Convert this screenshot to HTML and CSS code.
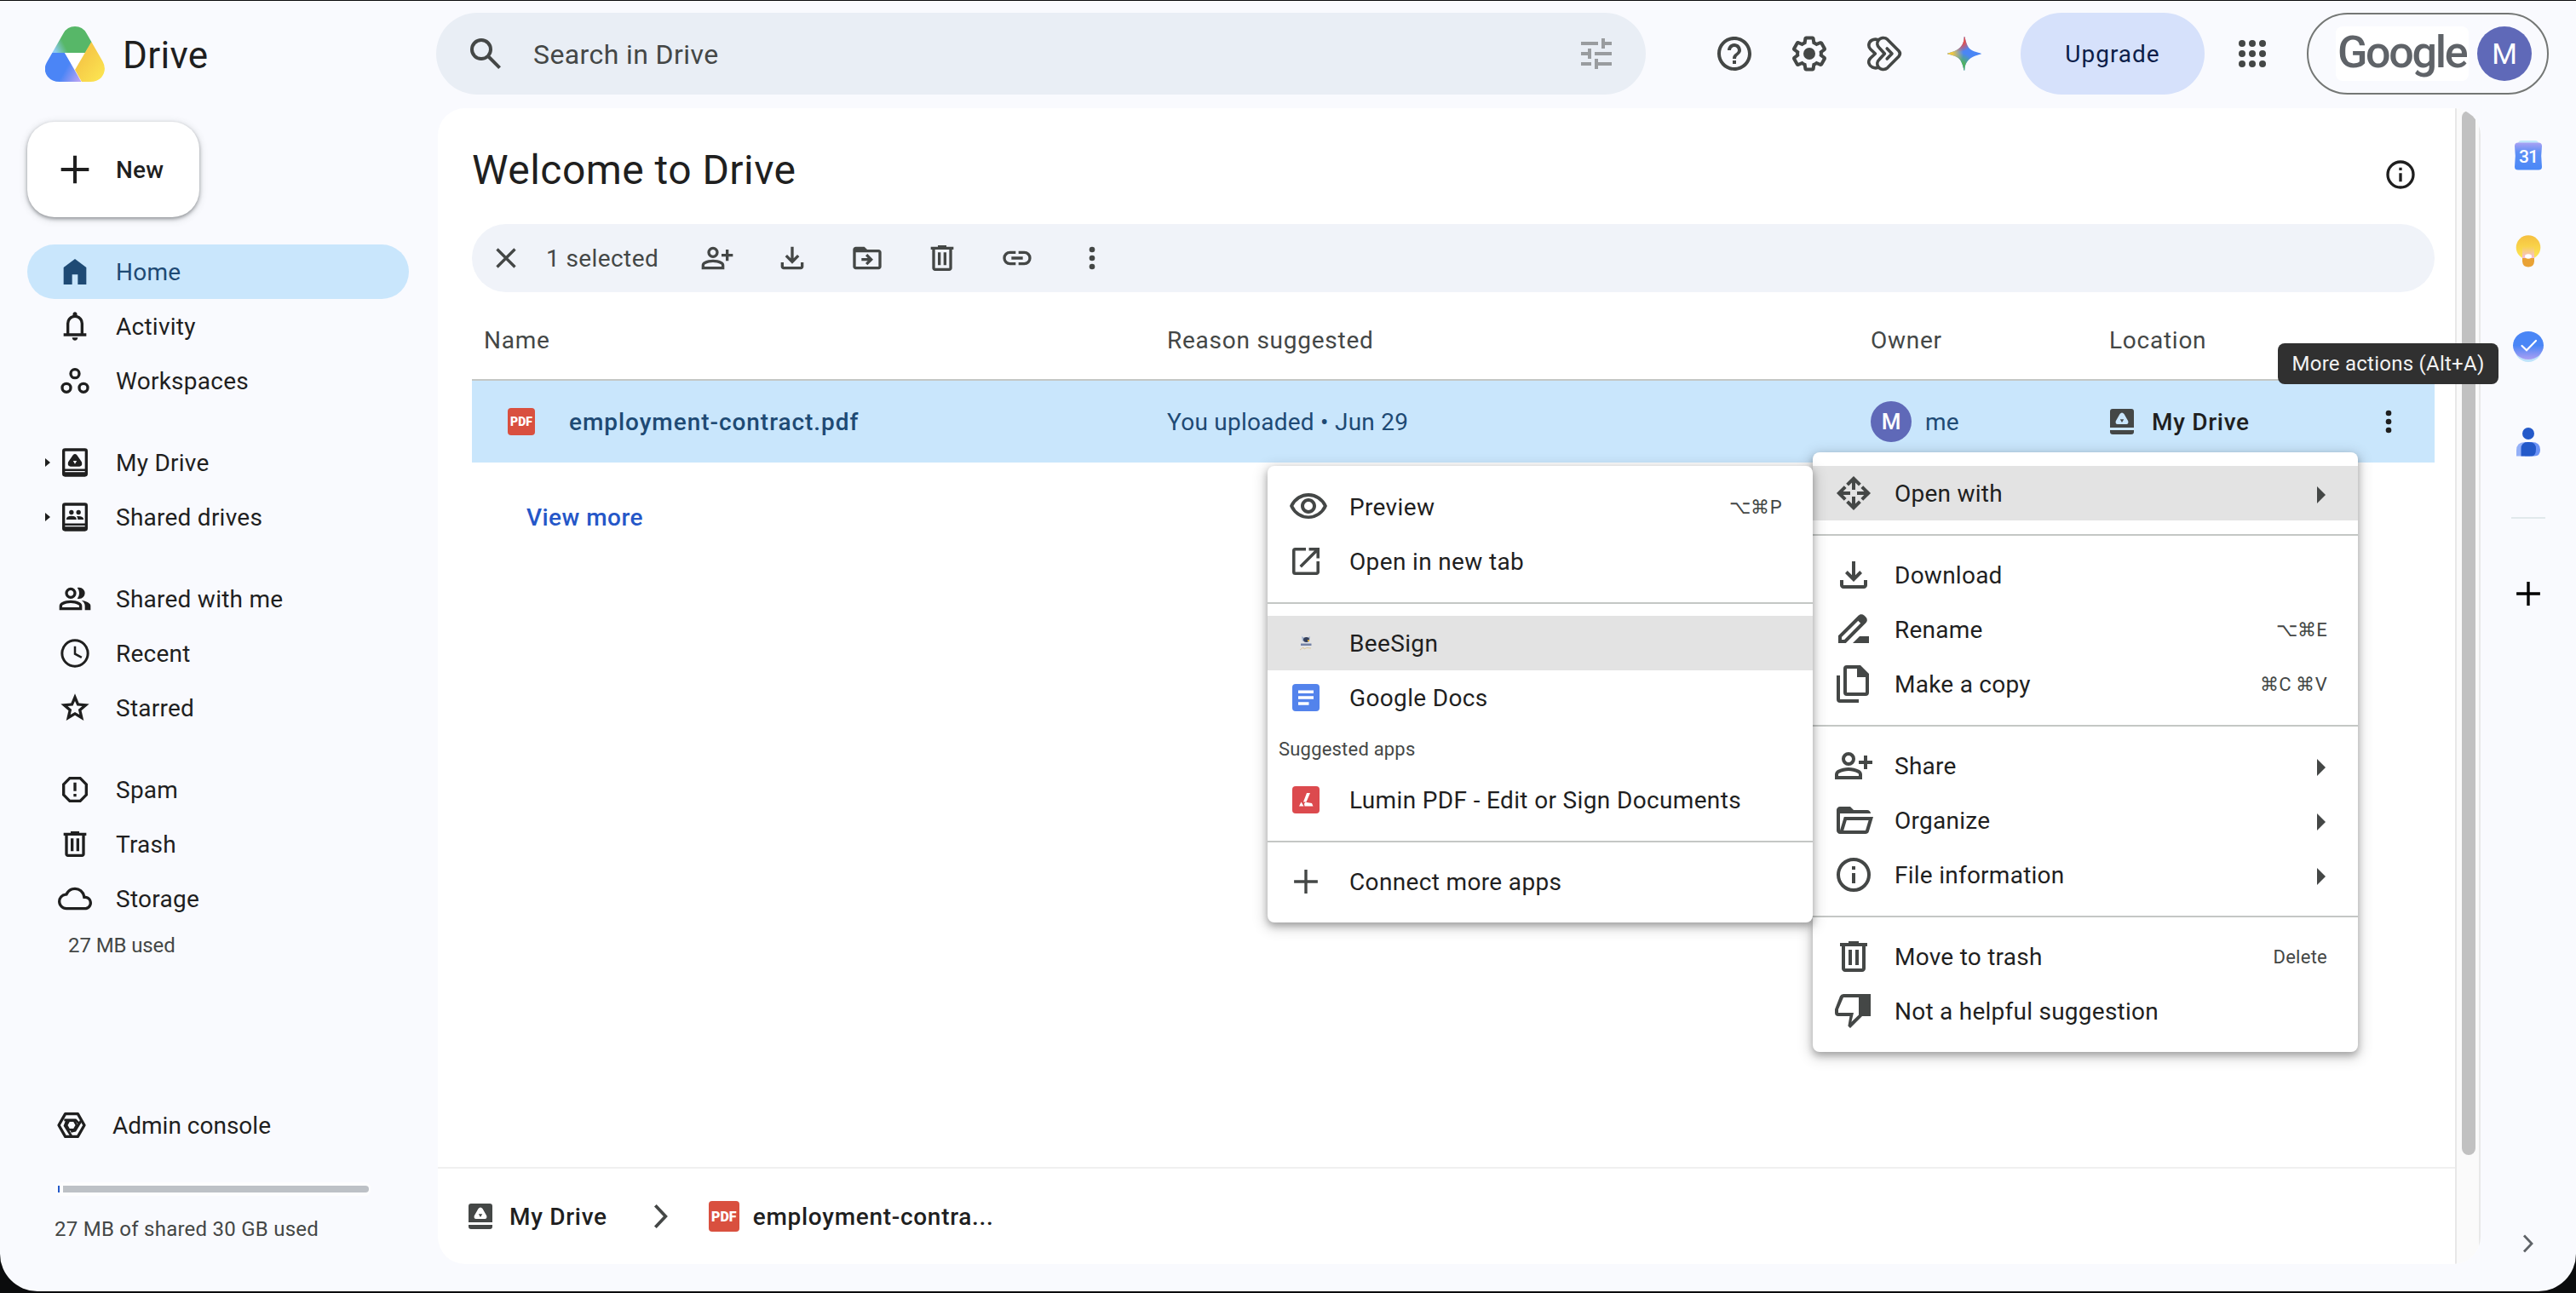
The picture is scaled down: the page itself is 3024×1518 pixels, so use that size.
FILE: index.html
```
<!DOCTYPE html>
<html lang="en">
<head>
  <meta charset="UTF-8" />
  <meta name="viewport" content="width=device-width, initial-scale=1.0" />
  <title>Home - Google Drive</title>
  <link rel="stylesheet" href="styles.css">
</head>
<body>
  <!-- icon sprite -->
  <svg class="sprite" width="0" height="0">
    <symbol id="i-plus" viewBox="0 0 24 24"><path d="M10.8 2.200h2.400v8.600h8.600v2.400h-8.600v8.600h-2.400v-8.600H2.200v-2.400h8.600z"/></symbol>
    <symbol id="i-home" viewBox="0 0 24 24"><path d="M4 21V9l8-6 8 6v12h-6v-7h-4v7z"/></symbol>
    <symbol id="i-bell" viewBox="0 0 24 24"><path d="M4 19v-2h2v-7q0-2.075 1.25-3.687T10.5 4.2v-.7q0-.625.438-1.062T12 2t1.063.438T13.5 3.5v.7q2 .5 3.25 2.113T18 10v7h2v2zm8 3q-.825 0-1.412-.587T10 20h4q0 .825-.587 1.413T12 22m-4-5h8v-7q0-1.65-1.175-2.825T12 6T9.175 7.175T8 10z"/></symbol>
    <symbol id="i-workspaces" viewBox="0 0 24 24"><g fill="none" stroke="currentColor" stroke-width="2"><circle cx="12" cy="7" r="3"/><circle cx="6" cy="17" r="3"/><circle cx="18" cy="17" r="3"/></g></symbol>
    <symbol id="i-drive" viewBox="0 0 24 24"><path fill-rule="evenodd" d="M5 2h14a2 2 0 0 1 2 2v16a2 2 0 0 1-2 2H5a2 2 0 0 1-2-2V4a2 2 0 0 1 2-2zm0 2v12.500h14V4zm0 14v.8h14V18zm5.600-11.200q1.400-1.600 2.800 0l3.300 4.800q1 2.800-1.500 3.200H8.800q-2.500-.4-1.500-3.200zM10.700 10.800l1.300 2.200 1.300-2.200z"/></symbol>
    <symbol id="i-shared-drives" viewBox="0 0 24 24"><path fill-rule="evenodd" d="M5 2h14a2 2 0 0 1 2 2v16a2 2 0 0 1-2 2H5a2 2 0 0 1-2-2V4a2 2 0 0 1 2-2zm0 2v12.500h14V4zm0 14v.8h14V18z"/><circle cx="9.500" cy="8.700" r="1.600"/><circle cx="14.500" cy="8.700" r="1.600"/><path d="M5.900 13.800q0-2.500 3.600-2.500t3.600 2.500zM14 13.800q0-1.500-.8-2.400 4.900-.4 4.900 2.400z"/></symbol>
    <symbol id="i-group" viewBox="0 0 24 24"><path d="M1 20v-2.800q0-.85.438-1.562T2.600 14.550q1.550-.775 3.150-1.162T9 13t3.250.388t3.150 1.162q.725.375 1.163 1.088T17 17.200V20zm18 0v-3q0-1.100-.612-2.113T16.650 13.150q1.275.15 2.400.513t2.100.887q.9.500 1.375 1.112T23 17v3zM9 12q-1.650 0-2.825-1.175T5 8t1.175-2.825T9 4t2.825 1.175T13 8t-1.175 2.825T9 12m10-4q0 1.650-1.175 2.825T15 12q-.275 0-.7-.062t-.7-.138q.675-.8 1.038-1.775T15 8t-.362-2.025T13.600 4.200q.35-.125.7-.163T15 4q1.650 0 2.825 1.175T19 8M3 18h12v-.8q0-.275-.137-.5t-.363-.35q-1.350-.675-2.725-1.012T9 15t-2.775.338T3.500 16.350q-.225.125-.363.35T3 17.200zm6-8q.825 0 1.413-.587T11 8t-.587-1.412T9 6t-1.412.588T7 8t.588 1.413T9 10"/></symbol>
    <symbol id="i-clock" viewBox="0 0 24 24"><g fill="none" stroke="currentColor"><circle cx="12" cy="12" r="9.100" stroke-width="1.800"/><path d="M12 7v5.400l4.700 2.500" stroke-width="1.500"/></g></symbol>
    <symbol id="i-star" viewBox="0 0 24 24"><path d="m8.850 16.825l3.150-1.900l3.150 1.925l-.825-3.600l2.775-2.400l-3.650-.325l-1.450-3.400l-1.450 3.375l-3.650.325l2.775 2.425zM5.825 21l1.625-7.025L2 9.250l7.200-.625L12 2l2.800 6.625l7.200.625l-5.450 4.725L18.175 21L12 17.275z"/></symbol>
    <symbol id="i-spam" viewBox="0 0 24 24"><path fill="none" stroke="currentColor" stroke-width="2" d="M8.300 4h7.400L20 8.300v7.400L15.700 20H8.300L4 15.700V8.300z"/><path d="M11 7h2v6h-2zM11 15h2v2h-2z"/></symbol>
    <symbol id="i-trash" viewBox="0 0 24 24"><path d="M7 21q-.825 0-1.412-.587T5 19V6H4V4h5V3h6v1h5v2h-1v13q0 .825-.587 1.413T17 21zM17 6H7v13h10zM9 17h2V8H9zm4 0h2V8h-2z"/></symbol>
    <symbol id="i-cloud" viewBox="0 0 24 24"><path d="M19.350 10.040A7.490 7.490 0 0 0 12 4C9.110 4 6.600 5.640 5.350 8.040A5.994 5.994 0 0 0 0 14c0 3.310 2.690 6 6 6h13c2.760 0 5-2.240 5-5 0-2.640-2.050-4.780-4.650-4.960zM19 18H6c-2.210 0-4-1.790-4-4 0-2.050 1.530-3.760 3.560-3.970l1.070-.11.5-.95A5.469 5.469 0 0 1 12 6c2.620 0 4.880 1.860 5.390 4.430l.3 1.500 1.530.11A2.980 2.980 0 0 1 22 15c0 1.650-1.350 3-3 3z"/></symbol>
    <symbol id="i-admin" viewBox="0 0 24 24"><g fill="none" stroke="currentColor" stroke-width="2"><path stroke-linejoin="round" d="M7.600 4h8.800l4.600 8-4.600 8H7.600L3 12z"/><path stroke-width="1.700" d="M6.800 8.300h8l3.200 3.200M18.600 9l-4.100 6.700-3 .8M11.800 19.500L7.300 12.300 8.600 9"/><path stroke-width="1.500" d="M10.200 8.900h3.600l1.800 3.100-1.800 3.100h-3.600L8.400 12z"/></g></symbol>
    <symbol id="i-search" viewBox="0 0 24 24"><path d="m19.600 21l-6.300-6.300q-.75.6-1.725.95T9.500 16q-2.725 0-4.612-1.888T3 9.500t1.888-4.612T9.500 3t4.613 1.888T16 9.500q0 1.100-.35 2.075T14.700 13.300l6.300 6.300zM9.500 14q1.875 0 3.188-1.312T14 9.500t-1.312-3.187T9.500 5T6.313 6.313T5 9.500t1.313 3.188T9.500 14"/></symbol>
    <symbol id="i-tune" viewBox="0 0 24 24"><path d="M3 17v2h6v-2H3zM3 5v2h10V5H3zm10 16v-2h8v-2h-8v-2h-2v6h2zM7 9v2H3v2h4v2h2V9H7zm14 4v-2H11v2h10zm-6-4h2V7h4V5h-4V3h-2v6z"/></symbol>
    <symbol id="i-help" viewBox="0 0 24 24"><path d="M11 18h2v-2h-2v2zm1-16C6.480 2 2 6.480 2 12s4.480 10 10 10 10-4.480 10-10S17.520 2 12 2zm0 18c-4.410 0-8-3.590-8-8s3.590-8 8-8 8 3.590 8 8-3.590 8-8 8zm0-14c-2.210 0-4 1.790-4 4h2c0-1.100.9-2 2-2s2 .9 2 2c0 2-3 1.750-3 5h2c0-2.250 3-2.500 3-5 0-2.210-1.790-4-4-4z"/></symbol>
    <symbol id="i-settings" viewBox="0 0 24 24"><path d="M13.850 22.250h-3.700c-.74 0-1.360-.54-1.450-1.270l-.27-1.890c-.27-.14-.53-.29-.79-.46l-1.800.72c-.7.26-1.470-.03-1.810-.65L2.200 15.530c-.35-.66-.2-1.440.36-1.880l1.530-1.190c-.01-.15-.02-.3-.02-.46 0-.15.01-.31.02-.46l-1.520-1.190c-.59-.45-.74-1.260-.37-1.880l1.850-3.190c.34-.62 1.110-.9 1.790-.63l1.810.73c.26-.17.52-.32.78-.46l.27-1.910c.09-.7.71-1.250 1.440-1.250h3.700c.74 0 1.360.54 1.450 1.270l.27 1.890c.27.14.53.29.79.46l1.800-.72c.71-.26 1.480.03 1.820.65l1.840 3.180c.36.66.2 1.440-.36 1.880l-1.520 1.190c.01.15.02.3.02.46s-.01.31-.02.46l1.520 1.190c.56.45.72 1.230.37 1.860l-1.860 3.220c-.34.62-1.110.9-1.800.63l-1.800-.72c-.26.17-.52.32-.78.46l-.27 1.910c-.1.680-.72 1.220-1.460 1.220zm-3.230-2h2.760l.37-2.550.53-.22c.44-.18.88-.44 1.340-.78l.45-.34 2.380.96 1.380-2.400-2.030-1.580.07-.56c.03-.26.06-.51.06-.78s-.03-.53-.06-.78l-.07-.56 2.030-1.580-1.390-2.400-2.390.96-.45-.35c-.42-.32-.87-.58-1.330-.77l-.52-.22-.37-2.550h-2.760l-.37 2.550-.53.21c-.44.19-.88.44-1.340.79l-.45.33-2.380-.95-1.390 2.390 2.030 1.580-.07.56a7 7 0 0 0-.06.79c0 .26.02.53.06.78l.07.56-2.030 1.580 1.380 2.400 2.390-.96.45.35c.43.33.86.58 1.330.77l.53.22.38 2.550z"/><circle cx="12" cy="12" r="3.500"/></symbol>
    <symbol id="i-labs" viewBox="0 0 24 24"><g fill="none" stroke="currentColor" stroke-width="1.800" stroke-linejoin="round" stroke-linecap="round"><path d="M9.100 8.600 12.200 12 9.100 15.400C7.700 16.700 7.600 18.400 8.400 19.600c1.200 1.900 3.900 2.200 5.500.7l6.600-6.700q1.400-1.600 0-3.200l-6.600-6.700c-1.600-1.500-4.300-1.200-5.500.7-.8 1.200-.7 2.900.7 4.200z"/><path d="M8 3.700C5.500 3.100 3 4.500 2.900 7c0 1 .4 1.800 1 2.400L6.700 12l-2.800 2.600c-.9.9-1.200 2.100-.9 3.200.6 2 3 3 5 2.500M13.600 9l2.900 3-2.900 3"/></g></symbol>
    <symbol id="i-apps" viewBox="0 0 24 24"><circle cx="6" cy="6" r="2"/><circle cx="12" cy="6" r="2"/><circle cx="18" cy="6" r="2"/><circle cx="6" cy="12" r="2"/><circle cx="12" cy="12" r="2"/><circle cx="18" cy="12" r="2"/><circle cx="6" cy="18" r="2"/><circle cx="12" cy="18" r="2"/><circle cx="18" cy="18" r="2"/></symbol>
    <symbol id="i-info" viewBox="0 0 24 24"><path d="M11 7h2v2h-2zM11 11h2v6h-2z"/><circle cx="12" cy="12" r="9" fill="none" stroke="currentColor" stroke-width="2"/></symbol>
    <symbol id="i-close" viewBox="0 0 24 24"><path fill="none" stroke="currentColor" stroke-width="2" d="M5.700 5.700l12.600 12.600M18.300 5.700L5.700 18.300"/></symbol>
    <symbol id="i-person-add" viewBox="0 0 24 24"><path d="M18 14v-3h-3V9h3V6h2v3h3v2h-3v3zm-9-2q-1.650 0-2.825-1.175T5 8t1.175-2.825T9 4t2.825 1.175T13 8t-1.175 2.825T9 12m-8 8v-2.800q0-.85.438-1.562T2.600 14.550q1.550-.775 3.150-1.162T9 13t3.250.388t3.150 1.162q.725.375 1.163 1.088T17 17.200V20zm2-2h12v-.8q0-.275-.137-.5t-.363-.35q-1.350-.675-2.725-1.012T9 15t-2.775.338T3.500 16.350q-.225.125-.363.35T3 17.200zm6-8q.825 0 1.413-.587T11 8t-.587-1.412T9 6t-1.412.588T7 8t.588 1.413T9 10"/></symbol>
    <symbol id="i-download" viewBox="0 0 24 24"><path d="M12 16l-5-5 1.400-1.450 2.600 2.600V4h2v8.150l2.600-2.600L17 11zM6 20q-.825 0-1.412-.587T4 18v-3h2v3h12v-3h2v3q0 .825-.587 1.413T18 20z"/></symbol>
    <symbol id="i-move" viewBox="0 0 24 24"><path fill-rule="evenodd" d="M4 20q-.825 0-1.412-.587T2 18V6q0-.825.588-1.412T4 4h6l2 2h8q.825 0 1.413.588T22 8v10q0 .825-.587 1.413T20 20zm0-2h16V8H4zm8.200-1l4-4-4-4-1.400 1.400 1.600 1.600H8v2h4.400l-1.600 1.600z"/></symbol>
    <symbol id="i-link" viewBox="0 0 24 24"><path d="M11 17H7q-2.075 0-3.537-1.463T2 12t1.463-3.537T7 7h4v2H7q-1.250 0-2.125.875T4 12t.875 2.125T7 15h4zm-3-4v-2h8v2zm5 4v-2h4q1.250 0 2.125-.875T20 12t-.875-2.125T17 9h-4V7h4q2.075 0 3.538 1.463T22 12t-1.463 3.538T17 17z"/></symbol>
    <symbol id="i-more" viewBox="0 0 24 24"><circle cx="12" cy="6" r="2"/><circle cx="12" cy="12" r="2"/><circle cx="12" cy="18" r="2"/></symbol>
    <symbol id="i-drive-solid" viewBox="0 0 28 30"><path fill-rule="evenodd" d="M3 0h22a3 3 0 0 1 3 3v19H0V3a3 3 0 0 1 3-3zm8.500 6l-4.700 8.200q-.9 3.600 2 3.800h10.400q2.900-.2 2-3.800L16.500 6q-2.500-3-5 0zm.3 6.200h4.400L14 16zM0 25h28v2a3 3 0 0 1-3 3H3a3 3 0 0 1-3-3z"/></symbol>
    <symbol id="i-open-with" viewBox="0 0 24 24"><path fill="none" stroke="currentColor" stroke-width="2" d="M12 3.500V10M8.300 7.100L12 3.400l3.700 3.700M12 20.500V14M8.300 16.900l3.700 3.700 3.700-3.700M3.500 12H10M7.100 8.300L3.400 12l3.700 3.700M20.500 12H14M16.900 8.300l3.700 3.700-3.700 3.700"/></symbol>
    <symbol id="i-rename" viewBox="0 0 24 24"><path fill="none" stroke="currentColor" stroke-width="2" d="M4 19v-3L15.600 4.500a1.300 1.300 0 0 1 1.900 0l1 1a1.300 1.300 0 0 1 0 1.900L7 19z"/><path d="M13.500 5.800l2.700-2.500 3.500 3.500-2.500 2.700zM11.500 20l4-4H21v4z"/></symbol>
    <symbol id="i-copy" viewBox="0 0 24 24"><path fill-rule="evenodd" d="M8 1h8l5 5v11a2 2 0 0 1-2 2H8a2 2 0 0 1-2-2V3a2 2 0 0 1 2-2zm0 2v14h11V8h-5V3z"/><path d="M2 7h2v14h11v2H4a2 2 0 0 1-2-2z"/></symbol>
    <symbol id="i-folder" viewBox="0 0 24 24"><path d="M4 20q-.825 0-1.412-.587T2 18V6q0-.825.588-1.412T4 4h6l2 2h8q.825 0 1.413.588T22 8H4v10l2.400-8h17.100l-2.575 8.575q-.2.650-.737 1.038T19 20zm2.100-2H19l1.800-6H7.900z"/></symbol>
    <symbol id="i-thumb-down" viewBox="0 0 24 24"><path fill-rule="evenodd" d="M6 2h16v13h-5l-7 7-1.300-1.200 1-5.800H3q-2 0-2-2v-2l3-7.700Q4.600 2 6 2zm9 2H6l-3 7v2h9l-1.300 5.400 4.300-4.200z"/></symbol>
    <symbol id="i-eye" viewBox="0 0 24 24"><path d="M12 6a9.770 9.770 0 0 1 8.820 5.500 9.647 9.647 0 0 1-17.640 0A9.770 9.770 0 0 1 12 6m0-2C7 4 2.730 7.110 1 11.500 2.730 15.890 7 19 12 19s9.270-3.110 11-7.500C21.270 7.110 17 4 12 4zm0 5a2.500 2.500 0 0 1 0 5 2.500 2.500 0 0 1 0-5m0-2c-2.480 0-4.500 2.020-4.500 4.500S9.520 16 12 16s4.500-2.020 4.500-4.500S14.480 7 12 7z"/></symbol>
    <symbol id="i-new-tab" viewBox="3 3 18 18"><path d="M19 19H5V5h7V3H5a2 2 0 0 0-2 2v14a2 2 0 0 0 2 2h14c1.100 0 2-.9 2-2v-7h-2v7zM14 3v2h3.590l-9.830 9.830 1.410 1.410L19 6.410V10h2V3h-7z"/></symbol>
    <symbol id="i-chevron" viewBox="0 0 24 24"><path fill="none" stroke="currentColor" stroke-width="2.800" d="M7 2.500l9 9.500-9 9.500"/></symbol>
  </svg>

  <div class="window">
    <header class="topbar">
      <div class="brand">
        <svg class="brand-logo" viewBox="0 0 70 65">
          <defs>
            <clipPath id="logo-clip"><path d="M21.500 8Q26 0 35 0t13.500 8L67.500 41Q73 51 66 60q-5 5-13 5H17Q8 65 3 59-3 51 2 42z"/></clipPath>
            <linearGradient id="lg-green" gradientUnits="userSpaceOnUse" x1="10" y1="26" x2="26" y2="18"><stop offset="0" stop-color="#8ecbf3"/><stop offset=".75" stop-color="#57b768"/></linearGradient>
            <linearGradient id="lg-blue" gradientUnits="userSpaceOnUse" x1="24" y1="50" x2="42" y2="60"><stop offset="0" stop-color="#4b85f6"/><stop offset="1" stop-color="#b7a3f3"/></linearGradient>
            <linearGradient id="lg-yellow" gradientUnits="userSpaceOnUse" x1="44" y1="40" x2="66" y2="58"><stop offset="0" stop-color="#f6ca47"/><stop offset="1" stop-color="#fbe250"/></linearGradient>
          </defs>
          <g clip-path="url(#logo-clip)">
            <path fill="url(#lg-green)" d="M0 0h66L47 31H0z"/>
            <path fill="url(#lg-blue)" d="M-2 31h25l20 35H-2z"/>
            <path fill="#fff" d="M23 31h24L35 51z"/>
            <path fill="url(#lg-yellow)" d="M54 18.500L35 51l8.500 15H74V18z"/>
          </g>
        </svg>
        <span class="brand-name">Drive</span>
      </div>
      <div class="search">
        <svg class="icon-lg"><use href="#i-search"/></svg>
        <span class="search-text">Search in Drive</span>
        <svg class="icon-lg tune"><use href="#i-tune"/></svg>
      </div>
      <div class="actions">
        <svg class="icon-lg"><use href="#i-help"/></svg>
        <svg class="icon-lg"><use href="#i-settings"/></svg>
        <svg class="icon-lg"><use href="#i-labs"/></svg>
        <svg class="icon-lg" viewBox="0 0 24 24">
          <defs>
            <radialGradient id="sp-red" gradientUnits="userSpaceOnUse" cx="9.500" cy="3.500" r="7.500"><stop offset=".4" stop-color="#e8504a"/><stop offset="1" stop-color="#e8504a" stop-opacity="0"/></radialGradient>
            <radialGradient id="sp-yellow" gradientUnits="userSpaceOnUse" cx="2" cy="12" r="9.500"><stop offset=".3" stop-color="#f0c93f"/><stop offset="1" stop-color="#f0c93f" stop-opacity="0"/></radialGradient>
            <radialGradient id="sp-green" gradientUnits="userSpaceOnUse" cx="9.500" cy="20.500" r="9"><stop offset=".4" stop-color="#50b262"/><stop offset="1" stop-color="#50b262" stop-opacity="0"/></radialGradient>
            <path id="spark" d="M12 2c.5 0 .5 3.200 2.400 6.200S22 11.400 22 12s-4.700.8-7.600 3.800S12.500 22 12 22s-.5-3.200-2.400-6.200S2 12.600 2 12s4.700-.8 7.600-3.800S11.500 2 12 2z"/>
          </defs>
          <use href="#spark" fill="#4a86f5"/>
          <use href="#spark" fill="url(#sp-green)"/>
          <use href="#spark" fill="url(#sp-yellow)"/>
          <use href="#spark" fill="url(#sp-red)"/>
        </svg>
      </div>
      <button class="upgrade">Upgrade</button>
      <svg class="icon-lg apps"><use href="#i-apps"/></svg>
      <div class="account">
        <span class="google">Google</span>
        <span class="avatar">M</span>
      </div>
    </header>

    <div class="content">
      <nav class="sidebar">
        <button class="new-btn"><svg><use href="#i-plus"/></svg>New</button>
        <div class="nav-group">
          <a class="nav-item active"><svg><use href="#i-home"/></svg>Home</a>
          <a class="nav-item"><svg><use href="#i-bell"/></svg>Activity</a>
          <a class="nav-item"><svg><use href="#i-workspaces"/></svg>Workspaces</a>
        </div>
        <div class="nav-group">
          <a class="nav-item expandable"><svg><use href="#i-drive"/></svg>My Drive</a>
          <a class="nav-item expandable"><svg><use href="#i-shared-drives"/></svg>Shared drives</a>
        </div>
        <div class="nav-group">
          <a class="nav-item"><svg><use href="#i-group"/></svg>Shared with me</a>
          <a class="nav-item"><svg><use href="#i-clock"/></svg>Recent</a>
          <a class="nav-item"><svg><use href="#i-star"/></svg>Starred</a>
        </div>
        <div class="nav-group">
          <a class="nav-item"><svg><use href="#i-spam"/></svg>Spam</a>
          <a class="nav-item"><svg><use href="#i-trash"/></svg>Trash</a>
          <a class="nav-item"><svg><use href="#i-cloud"/></svg>Storage</a>
          <div class="used">27 MB used</div>
        </div>
        <div class="sidebar-bottom">
          <a class="admin"><svg><use href="#i-admin"/></svg>Admin console</a>
          <div class="meter"><span class="meter-used"></span><span class="meter-free"></span></div>
          <div class="quota">27 MB of shared 30 GB used</div>
        </div>
      </nav>

      <main class="main">
        <div class="pane">
          <div class="title-row">
            <h1>Welcome to Drive</h1>
            <svg class="icon"><use href="#i-info"/></svg>
          </div>
          <div class="toolbar">
            <svg class="icon"><use href="#i-close"/></svg>
            <span class="selected-count">1 selected</span>
            <div class="toolbar-icons">
              <svg class="icon"><use href="#i-person-add"/></svg>
              <svg class="icon"><use href="#i-download"/></svg>
              <svg class="icon"><use href="#i-move"/></svg>
              <svg class="icon"><use href="#i-trash"/></svg>
              <svg class="icon"><use href="#i-link"/></svg>
              <svg class="icon"><use href="#i-more"/></svg>
            </div>
          </div>
          <div class="table">
            <div class="row head">
              <span>Name</span><span>Reason suggested</span><span>Owner</span><span>Location</span>
            </div>
            <div class="row file">
              <span class="cell name"><span class="pdf">PDF</span>employment-contract.pdf</span>
              <span>You uploaded • Jun 29</span>
              <span class="cell owner"><span class="avatar small">M</span>me</span>
              <span class="cell location"><svg class="drive-solid"><use href="#i-drive-solid"/></svg>My Drive</span>
              <svg class="icon row-more"><use href="#i-more"/></svg>
            </div>
          </div>
          <a class="view-more">View more</a>
          <div class="breadcrumb">
            <svg class="drive-solid"><use href="#i-drive-solid"/></svg>
            <span class="crumb-drive">My Drive</span>
            <svg class="crumb-arrow"><use href="#i-chevron"/></svg>
            <span class="pdf large">PDF</span>
            <span>employment-contra...</span>
          </div>
        </div>
        <div class="scroll-track"><div class="scroll-thumb"></div></div>
      </main>

      <aside class="side-panel">
        <svg class="app" viewBox="0 0 36 36">
          <defs>
            <linearGradient id="cal" x1="0" y1="0" x2="0" y2="1"><stop offset="0" stop-color="#aaa2f4"/><stop offset=".35" stop-color="#5e8ff5"/><stop offset="1" stop-color="#4a88f7"/></linearGradient>
          </defs>
          <rect x="6" y="0" width="24" height="10" rx="4" fill="#c0e7fb"/>
          <path fill="url(#cal)" d="M6 2.500h24q4 0 4 4l-.8 11.500.8 13q0 3.500-4 3.500H6q-4 0-4-3.500l.8-13L2 6.500q0-4 4-4z"/>
          <text x="18" y="25.500" class="cal-day">31</text>
        </svg>
        <svg class="app" viewBox="0 0 36 36">
          <defs>
            <linearGradient id="bulb" x1="0" y1="0" x2="0" y2="1"><stop offset="0" stop-color="#f5bf40"/><stop offset="1" stop-color="#fdea55"/></linearGradient>
            <linearGradient id="glow" x1="0" y1="0" x2="0" y2="1"><stop offset="0" stop-color="#f3b6d0" stop-opacity="0"/><stop offset="1" stop-color="#f3b6ec"/></linearGradient>
          </defs>
          <circle cx="18" cy="13.500" r="14.300" fill="url(#bulb)"/>
          <path fill="url(#glow)" d="M11 12h14v15H11z"/>
          <path fill="#e9a235" d="M11 26h14v4q-.5 6.500-7 6.500T11 30z"/>
          <ellipse cx="18" cy="24" rx="4" ry="2.800" fill="#fff"/>
        </svg>
        <svg class="app" viewBox="0 0 36 36">
          <defs>
            <linearGradient id="task" x1="0" y1="0" x2="0" y2="1"><stop offset=".5" stop-color="#4a86f6"/><stop offset="1" stop-color="#ab9ff3"/></linearGradient>
          </defs>
          <circle cx="18" cy="20" r="16" fill="#bfe3fb"/>
          <ellipse cx="18" cy="16.500" rx="18" ry="16.500" fill="url(#task)"/>
          <path fill="none" stroke="#fff" stroke-width="2.200" stroke-linecap="round" d="M10.500 17l5.500 5.300L27 11"/>
        </svg>
        <svg class="app" viewBox="0 0 36 36">
          <circle cx="18" cy="8" r="7" fill="#2459c9"/>
          <path fill="#94b0f8" d="M4 34.500V28q0-10 10-10h6v16.500z"/>
          <path fill="#6c93f6" d="M14 18h8q10 0 10 9 0 7.500-7 7.500H14z"/>
          <path fill="#2459c9" d="M9.500 34.500V26q0-8 8-8h1.500q8 0 8 8 0 8.500-5 8.500z"/>
        </svg>
        <div class="panel-line"></div>
        <svg class="panel-plus"><use href="#i-plus"/></svg>
        <svg class="panel-collapse"><use href="#i-chevron"/></svg>
      </aside>
    </div>
  </div>

  <div class="tooltip">More actions (Alt+A)</div>

  <div class="menu context-menu">
    <div class="menu-item hover"><svg><use href="#i-open-with"/></svg>Open with<span class="arrow"></span></div>
    <hr>
    <div class="menu-item"><svg><use href="#i-download"/></svg>Download</div>
    <div class="menu-item"><svg><use href="#i-rename"/></svg>Rename<span class="shortcut">⌥⌘E</span></div>
    <div class="menu-item"><svg><use href="#i-copy"/></svg>Make a copy<span class="shortcut">⌘C ⌘V</span></div>
    <hr>
    <div class="menu-item"><svg><use href="#i-person-add"/></svg>Share<span class="arrow"></span></div>
    <div class="menu-item"><svg><use href="#i-folder"/></svg>Organize<span class="arrow"></span></div>
    <div class="menu-item"><svg class="info"><use href="#i-info"/></svg>File information<span class="arrow"></span></div>
    <hr>
    <div class="menu-item"><svg><use href="#i-trash"/></svg>Move to trash<span class="shortcut">Delete</span></div>
    <div class="menu-item"><svg><use href="#i-thumb-down"/></svg>Not a helpful suggestion</div>
  </div>

  <div class="menu submenu">
    <div class="menu-item"><svg><use href="#i-eye"/></svg>Preview<span class="shortcut">⌥⌘P</span></div>
    <div class="menu-item"><svg class="sm"><use href="#i-new-tab"/></svg>Open in new tab</div>
    <hr>
    <div class="menu-item hover">
      <svg class="sm" viewBox="0 0 32 32"><path fill="#9fb0cc" d="M11 8l5 3-4 3zM21 8l-5 3 4 3z"/><ellipse cx="16.500" cy="12" rx="3.500" ry="3" fill="#34405c"/><path fill="#d9a93c" d="M18 12h2v2h-2z"/><path fill="#7583a6" d="M10 16.500h12.500v2.500H10z"/><path fill="none" stroke="#dfc99b" d="M9 24l4-3 1 2 3-1.500 5 .5"/></svg>BeeSign
    </div>
    <div class="menu-item">
      <svg class="sm" viewBox="0 0 32 32"><rect width="32" height="32" rx="4" fill="#5383ec"/><path fill="#fff" d="M7 7.500h18v3.500H7zM7 14.300h18v3.500H7zM7 21.200h12.500v3.500H7z"/></svg>Google Docs
    </div>
    <div class="menu-label">Suggested apps</div>
    <div class="menu-item">
      <svg class="sm" viewBox="0 0 32 32"><rect width="32" height="32" rx="4" fill="#dc4a4e"/><path fill="#fff" d="M17 8h4l-4.500 10.500h-3.500zM8 23.500l2.500-5 3 5zM14 20.500l1.500-1.800 7.500 1.300 1.500 3.500H14.500z"/></svg>Lumin PDF - Edit or Sign Documents
    </div>
    <hr>
    <div class="menu-item"><svg class="add"><use href="#i-plus"/></svg>Connect more apps</div>
  </div>
</body>
</html>
```
FILE: styles.css
```
* { box-sizing: border-box; }
body {
  margin: 0;
  padding-top: 1px;
  height: 1518px;
  background: #0b0c0d;
  font-family: 'Roboto', sans-serif;
  font-size: 28px;
  letter-spacing: 0.25px;
  color: #1f1f1f;
  overflow: hidden;
}
svg {
  fill: currentColor;
  flex: none;
}
.sprite { position: absolute; }
button {
  border: none;
  font: inherit;
  letter-spacing: inherit;
  color: inherit;
}
.window {
  height: 1515px;
  background: #f9fafe;
  border-radius: 0 0 44px 44px;
  display: flex;
  flex-direction: column;
}
.icon { width: 40px; height: 40px; }
.icon-lg { width: 48px; height: 48px; }

/* top bar */
.topbar {
  height: 126px;
  padding: 14px 32px 0 53px;
  display: flex;
  align-items: flex-start;
  color: #444746;
}
.brand {
  width: 459px;
  height: 96px;
  display: flex;
  align-items: center;
  gap: 21px;
  color: #1f1f1f;
}
.brand-logo { width: 70px; height: 65px; }
.brand-name {
  font-size: 44px;
  letter-spacing: 0.3px;
  padding-top: 4px;
}
.search {
  width: 1420px;
  height: 96px;
  border-radius: 48px;
  background: #e9eef5;
  display: flex;
  align-items: center;
  padding: 0 34px;
}
.search-text {
  font-size: 32px;
  letter-spacing: 0.4px;
  margin-left: 32px;
  padding-top: 2px;
  flex: 1;
}
.tune { color: #999c9f; }
.actions {
  height: 96px;
  display: flex;
  align-items: center;
  gap: 40px;
  margin-left: 80px;
}
.actions svg:last-child { margin-left: 6px; }
.upgrade {
  width: 216px;
  height: 96px;
  margin-left: 42px;
  border-radius: 48px;
  background: #d6e1fb;
  color: #0c1d49;
  font-weight: 450;
  letter-spacing: 1px;
}
.apps { margin: 24px 40px 0 32px; }
.account {
  width: 284px;
  height: 96px;
  border: 2px solid #747775;
  border-radius: 48px;
  display: flex;
  align-items: center;
  padding-left: 32px;
  gap: 10px;
}
.google {
  width: 156px;
  height: 64px;
  padding-left: 2px;
  border-radius: 8px;
  background: #fff;
  color: #5f6368;
  font-size: 52px;
  line-height: 62px;
  font-weight: 500;
  letter-spacing: -2.3px;
}
.avatar {
  width: 64px;
  height: 64px;
  border-radius: 50%;
  background: #5f69b8;
  color: #fff;
  font-size: 34px;
  letter-spacing: 0;
  display: flex;
  align-items: center;
  justify-content: center;
}
.avatar.small {
  width: 48px;
  height: 48px;
  font-size: 26px;
  font-weight: 500;
}

/* left navigation */
.content {
  flex: 1;
  display: flex;
}
.sidebar {
  width: 514px;
  padding: 16px 34px 0 32px;
  display: flex;
  flex-direction: column;
}
.new-btn {
  width: 202px;
  height: 112px;
  padding: 0 0 0 36px;
  margin-bottom: 32px;
  border-radius: 32px;
  background: #fff;
  box-shadow: 0 2px 4px rgba(60, 64, 67, 0.5), 0 2px 8px 2px rgba(60, 64, 67, 0.12);
  display: flex;
  align-items: center;
  gap: 28px;
  font-weight: 500;
}
.new-btn svg { width: 40px; height: 40px; }
.nav-group { margin-bottom: 32px; }
.nav-item {
  height: 64px;
  border-radius: 32px;
  padding-left: 36px;
  display: flex;
  align-items: center;
  gap: 28px;
  position: relative;
}
.nav-item svg { width: 40px; height: 40px; }
.nav-item.active {
  background: #c9e6fc;
  color: #1e4a74;
}
.nav-item.expandable::before {
  content: '';
  position: absolute;
  left: 21px;
  border-left: 6px solid #1f1f1f;
  border-top: 5px solid transparent;
  border-bottom: 5px solid transparent;
}
.used {
  padding-left: 48px;
  font-size: 24px;
  line-height: 46px;
  letter-spacing: -0.1px;
  color: #444746;
}
.sidebar-bottom {
  margin-top: auto;
  padding: 0 45px 59px 32px;
}
.admin {
  display: flex;
  align-items: center;
  gap: 28px;
  letter-spacing: 0;
}
.admin svg { width: 40px; height: 40px; }
.meter {
  height: 16px;
  margin: 47px 0 25px 1px;
  padding: 4px 2px 4px 3px;
  background: #fdfdfe;
  border-radius: 6px;
  display: flex;
  gap: 4px;
}
.meter-used { width: 2px; background: #2459c9; }
.meter-free {
  flex: 1;
  background: #bdc1c6;
  border-radius: 0 4px 4px 0;
}
.quota {
  font-size: 24px;
  line-height: 28px;
  color: #444746;
}

/* file list */
.main {
  width: 2398px;
  height: 1357px;
  border-radius: 32px;
  background: #fff;
  overflow: hidden;
  display: flex;
}
.pane {
  flex: 1;
  display: flex;
  flex-direction: column;
}
.title-row {
  height: 136px;
  padding: 20px 44px 0 40px;
  display: flex;
  align-items: center;
  justify-content: space-between;
}
.title-row h1 {
  margin: 0 0 12px;
  font-size: 48px;
  font-weight: 400;
  letter-spacing: 0.45px;
}
.toolbar {
  height: 80px;
  margin: 0 24px 0 40px;
  padding-left: 20px;
  border-radius: 40px;
  background: #f0f3f9;
  color: #444746;
  display: flex;
  align-items: center;
}
.selected-count {
  width: 181px;
  margin-left: 27px;
  font-weight: 450;
  letter-spacing: 0.4px;
}
.toolbar-icons { display: flex; gap: 48px; }
.table { margin: 0 24px 0 40px; }
.row {
  display: grid;
  grid-template-columns: 802px 826px 280px 1fr 108px;
  align-items: center;
  padding-left: 14px;
}
.row.head {
  height: 104px;
  padding-top: 10px;
  border-bottom: 2px solid #c4c7c5;
  font-weight: 450;
  letter-spacing: 0.75px;
  color: #444746;
}
.row.file {
  height: 96px;
  background: #c9e6fc;
  color: #1e4a74;
}
.cell { display: flex; align-items: center; }
.cell.name {
  padding-left: 28px;
  gap: 40px;
  font-weight: 500;
  letter-spacing: 0.95px;
}
.pdf {
  width: 32px;
  height: 32px;
  border-radius: 4px;
  background: #d9503f;
  color: #fff;
  font-size: 14px;
  font-weight: 900;
  letter-spacing: 0;
  display: flex;
  align-items: center;
  justify-content: center;
}
.pdf.large {
  width: 36px;
  height: 36px;
  font-size: 16px;
}
.cell.owner { gap: 16px; }
.cell.location {
  padding-left: 1px;
  gap: 21px;
  font-weight: 500;
  letter-spacing: 0.7px;
  color: #1f1f1f;
}
.drive-solid {
  width: 28px;
  height: 30px;
  color: #444746;
}
.row-more { justify-self: center; color: #1f1f1f; }
.view-more {
  margin: 48px 0 0 104px;
  font-weight: 500;
  letter-spacing: 0.45px;
  color: #2557c8;
}
.breadcrumb {
  height: 114px;
  margin-top: auto;
  padding-left: 36px;
  border-top: 2px solid #f0f0f0;
  display: flex;
  align-items: center;
  font-weight: 500;
  letter-spacing: 0.7px;
}
.crumb-drive { margin-left: 20px; }
.crumb-arrow {
  width: 32px;
  height: 32px;
  margin: 0 40px 0 47px;
  color: #444746;
}
.breadcrumb .pdf { margin-right: 16px; }
.scroll-track {
  width: 30px;
  padding: 3px 4px 128px 6px;
  background: #fafafa;
  border: 2px solid #e8e8e8;
  border-top: none;
  border-bottom: none;
  display: flex;
}
.scroll-thumb {
  width: 16px;
  border-radius: 8px;
  background: #c1c1c1;
}

/* right rail */
.side-panel {
  flex: 1;
  padding: 38px 0 44px;
  display: flex;
  flex-direction: column;
  align-items: center;
}
.app {
  width: 36px;
  height: 36px;
  margin-bottom: 76px;
  overflow: visible;
}
.cal-day {
  font-size: 21px;
  font-weight: 500;
  letter-spacing: -1px;
  text-anchor: middle;
  fill: #fff;
}
.panel-line {
  width: 40px;
  height: 2px;
  margin: -6px 0 71px;
  background: #e1e9ec;
}
.panel-plus { width: 34px; height: 34px; color: #000; }
.panel-collapse {
  width: 24px;
  height: 24px;
  margin-top: auto;
  color: #5f6368;
}

/* overlays */
.tooltip {
  position: absolute;
  left: 2674px;
  top: 403px;
  width: 259px;
  height: 48px;
  border-radius: 8px;
  background: #303030;
  color: #f2f2f2;
  font-size: 24px;
  line-height: 49px;
  text-align: center;
}
.menu {
  position: absolute;
  width: 640px;
  padding: 16px 0;
  background: #fff;
  border-radius: 8px;
  box-shadow: 0 4px 8px rgba(0, 0, 0, 0.28), 0 4px 16px 4px rgba(0, 0, 0, 0.14);
}
.context-menu { left: 2128px; top: 531px; }
.submenu { left: 1488px; top: 547px; }
.menu hr {
  margin: 16px 0 14px;
  border: none;
  border-top: 2px solid #c4c7c5;
}
.menu-item {
  height: 64px;
  padding: 0 36px 0 24px;
  display: flex;
  align-items: center;
  letter-spacing: 0.25px;
}
.submenu .menu-item { letter-spacing: 0.35px; }
.menu-item svg {
  width: 48px;
  height: 48px;
  margin-right: 24px;
  color: #444746;
}
.menu-item svg.sm {
  width: 32px;
  height: 32px;
  margin: 0 35px 0 5px;
}
.menu-item svg.add {
  width: 34px;
  height: 34px;
  margin: 0 34px 0 4px;
}
.menu-item.hover { background: #e3e3e3; }
.shortcut {
  margin-left: auto;
  font-size: 22px;
  font-weight: 450;
  color: #444746;
}
.arrow {
  margin: 4px 2px 0 auto;
  border-left: 10px solid #444746;
  border-top: 10px solid transparent;
  border-bottom: 10px solid transparent;
}
.menu-label {
  padding-left: 13px;
  font-size: 22px;
  line-height: 58px;
  height: 56px;
  letter-spacing: 0.2px;
  color: #444746;
}
```
